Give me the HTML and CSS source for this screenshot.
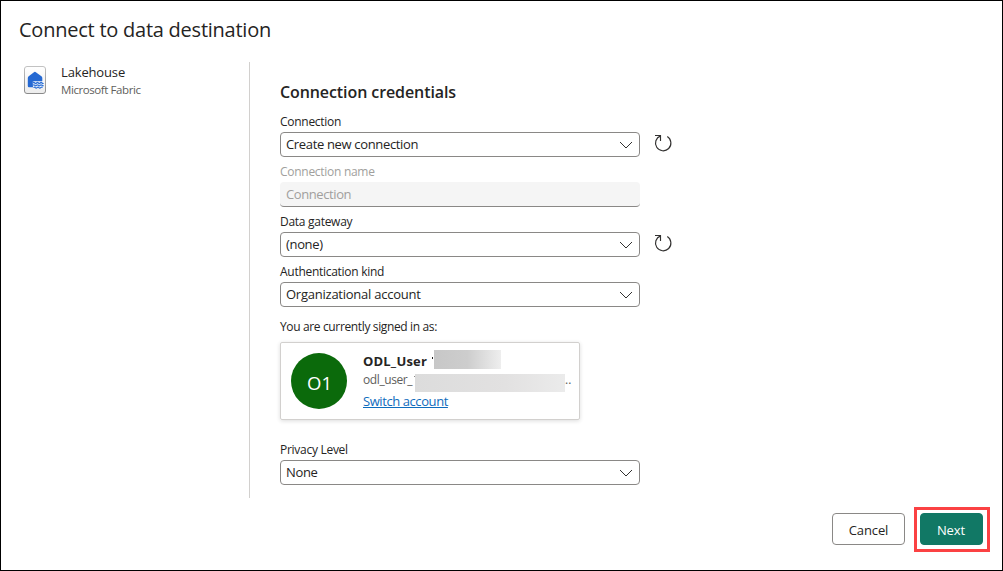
FILE: index.html
```html
<!DOCTYPE html>
<html lang="en">
<head>
<meta charset="utf-8">
<title>Connect to data destination</title>
<link rel="stylesheet" href="styles.css">
</head>
<body>
<svg width="0" height="0" class="symbols" aria-hidden="true">
  <symbol id="chevron" viewBox="0 0 14 8"><path d="M1 1l6 6 6-6" fill="none" stroke="#323130"/></symbol>
  <symbol id="refresh" viewBox="0 0 18 18"><path d="M13.300 2.600A7.700 7.700 0 1 1 6.500 1.900M1 1.500H6.500V7" fill="none" stroke="#323130" stroke-width="1.150"/></symbol>
</svg>
<main class="dialog">
  <h1 class="title"><span class="t-title">Connect to data destination</span></h1>
  <div class="content">
    <aside class="source">
      <svg class="source-icon" width="24" height="30" viewBox="0 0 24 30">
        <defs>
          <linearGradient id="edge" x2="0" y2="1"><stop stop-color="#c2c2c2"/><stop offset="1" stop-color="#8a8a8a"/></linearGradient>
          <linearGradient id="paper" x2="0" y2="1"><stop stop-color="#fff"/><stop offset="1" stop-color="#ececec"/></linearGradient>
        </defs>
        <rect x="1.5" y="1.500" width="21" height="27" rx="2.500" fill="url(#paper)" stroke="url(#edge)"/>
        <path d="M12.500 7L18.400 11.200Q19.300 12 19.300 13V16.500H11L10 22.300H6Q4.800 22.300 4.800 21V13Q4.800 12 5.700 11.200L11.300 7Q12 6.600 12.500 7Z" fill="#2468d2"/>
        <path d="M9.800 16.500H20.500V23H10Z" fill="#fff"/>
        <path d="M10 18q.9-1 1.800 0t1.800 0 1.800 0 1.800 0 1.800 0 1.500 0M10 20.300q.9-1 1.800 0t1.800 0 1.800 0 1.800 0 1.800 0 1.500 0M10.500 22.600q.9-1 1.800 0t1.800 0 1.800 0 1.800 0 1.800 0" fill="none" stroke="#2d70d6" stroke-width="1.300"/>
      </svg>
      <div class="source-text">
        <div class="source-name"><span class="t-lake">Lakehouse</span></div>
        <div class="source-kind"><span class="t-fabric">Microsoft Fabric</span></div>
      </div>
    </aside>
    <section class="credentials">
      <h2 class="heading"><span class="t-heading">Connection credentials</span></h2>
      <div class="field">
        <label class="label"><span class="t-l1">Connection</span></label>
        <div class="row">
          <div class="select"><span class="t-v1">Create new connection</span><svg class="chevron"><use href="#chevron"/></svg></div>
          <svg class="refresh"><use href="#refresh"/></svg>
        </div>
      </div>
      <div class="field disabled">
        <label class="label"><span class="t-l2">Connection name</span></label>
        <div class="input"><span class="t-v2">Connection</span></div>
      </div>
      <div class="field">
        <label class="label"><span class="t-l3">Data gateway</span></label>
        <div class="row">
          <div class="select"><span class="t-v3">(none)</span><svg class="chevron"><use href="#chevron"/></svg></div>
          <svg class="refresh"><use href="#refresh"/></svg>
        </div>
      </div>
      <div class="field">
        <label class="label"><span class="t-l4">Authentication kind</span></label>
        <div class="select"><span class="t-v4">Organizational account</span><svg class="chevron"><use href="#chevron"/></svg></div>
      </div>
      <div class="label signed"><span class="t-l5">You are currently signed in as:</span></div>
      <div class="account">
        <div class="avatar"><span class="t-av">O1</span></div>
        <div class="account-text">
          <div class="user"><span class="t-user">ODL_User</span><i class="sliver"></i><span class="mask mask-name"></span></div>
          <div class="mail"><span class="t-mail">odl_user_</span><i class="sliver"></i><span class="mask mask-mail"></span><span class="dots">..</span></div>
          <div class="switch"><a class="t-switch">Switch account</a></div>
        </div>
      </div>
      <div class="field">
        <label class="label"><span class="t-l6">Privacy Level</span></label>
        <div class="select"><span class="t-v5">None</span><svg class="chevron"><use href="#chevron"/></svg></div>
      </div>
    </section>
  </div>
  <footer class="actions">
    <button class="button"><span class="t-cancel">Cancel</span></button>
    <div class="highlight"><button class="button primary"><span class="t-next">Next</span></button></div>
  </footer>
</main>
</body>
</html>
```
FILE: styles.css
```css
* { box-sizing: border-box; }
body { margin: 0; font-family: "Open Sans", "Noto Sans", sans-serif; color: #252423; background: #fff; }
.symbols { position: absolute; }
.dialog { width: 1003px; height: 571px; border: 1px solid #000; display: flex; flex-direction: column; padding: 15px 12px 18px 18px; overflow: hidden; }
.title { margin: 0; font-size: 20px; line-height: 28px; font-weight: 400; letter-spacing: -.24px; white-space: nowrap; }
.content { display: flex; margin-top: 18px; height: 436px; }
.source { width: 231px; border-right: 1px solid #d2d0ce; display: flex; padding: 3px 0 0 4px; }
.source-icon { flex: none; }
.source-text { margin-left: 14px; white-space: nowrap; }
.source-name { font-size: 13px; line-height: 18px; margin-top: -2px; letter-spacing: -.15px; }
.source-kind { font-size: 11.5px; line-height: 16px; margin-top: 1px; letter-spacing: -.42px; color: #605e5c; }
.credentials { padding: 19px 0 0 30px; white-space: nowrap; }
.heading { margin: 0 0 10px; font-size: 16px; line-height: 23px; font-weight: 600; letter-spacing: -.09px; }
.field { height: 50px; }
.label { display: block; font-size: 12px; line-height: 16px; height: 18px; letter-spacing: -.28px; }
.t-l5 { letter-spacing: -.36px; }
.row { display: flex; }
.select, .input { width: 360px; height: 25px; flex: none; display: flex; align-items: center; justify-content: space-between; padding: 0 6px 0 5px; border: 1px solid #8a8886; border-radius: 4px; font-size: 13px; line-height: 18px; letter-spacing: -.34px; }
.select span { padding-bottom: 2px; }
.t-v4 { letter-spacing: -.24px; }
.input { border-width: 0 0 1px; padding-left: 6px; background: #f5f5f5; }
.input span { letter-spacing: -.4px; }
.disabled { color: #a19f9d; }
.chevron { width: 14px; height: 8px; }
.refresh { width: 18px; height: 18px; margin: 2px 0 0 14px; }
.signed { margin-top: 5px; height: 23px; }
.account { display: flex; width: 300px; height: 78px; border: 1px solid #d2d0ce; border-radius: 2px; box-shadow: 0 1px 4px rgba(0,0,0,.14); padding: 10px 0 0 10px; margin-bottom: 22px; }
.avatar { width: 56px; height: 56px; border-radius: 50%; background: #0b6a0b; color: #fff; font-size: 18.5px; line-height: 60px; text-align: center; padding-left: 1px; }
.account-text { margin: -4px 0 0 16px; }
.user, .mail { display: flex; height: 22px; align-items: flex-start; }
.user { font-size: 13px; font-weight: 700; line-height: 24px; letter-spacing: .18px; }
.mail { height: 23px; font-size: 12px; line-height: 18px; color: #605e5c; letter-spacing: -.4px; }
.sliver { width: 1px; height: 2px; margin: 8px 1px 0 0; background: #252423; }
.mail .sliver { height: 1px; margin: 5px 0 0; background: #8a8886; }
.mask { flex: none; }
.user .t-user { width: 69px; }
.mail .t-mail { width: 51px; }
.mask-name { width: 67px; height: 19px; margin-top: 1px; background: linear-gradient(90deg, #c7c7c7, #cdcdcd 50%, #eee); }
.mask-mail { width: 150px; height: 18px; margin-top: 3px; background: linear-gradient(90deg, #dcdcdc, #e2e1e1 60%, #ebebeb); }
.dots { letter-spacing: 0; }
.switch { font-size: 13px; line-height: 18px; margin-top: -2px; color: #0f6cbd; text-decoration: underline; letter-spacing: -.42px; }
.actions { display: flex; justify-content: flex-end; align-items: flex-start; margin-top: 9px; }
.button { display: block; width: 73px; height: 32px; margin-top: 6px; padding: 2px 0 0; font: 400 13px/20px "Open Sans", "Noto Sans", sans-serif; letter-spacing: -.1px; color: #252423; background: #fff; border: 1px solid #8a8886; border-radius: 4px; }
.highlight { flex: none; width: 76px; height: 45px; margin-left: 9px; padding: 3px; border: 3px solid #fb4143; }
.primary { width: 63px; margin: 0; padding-right: 1px; color: #fff; background: #117865; border-color: #117865; }
```
